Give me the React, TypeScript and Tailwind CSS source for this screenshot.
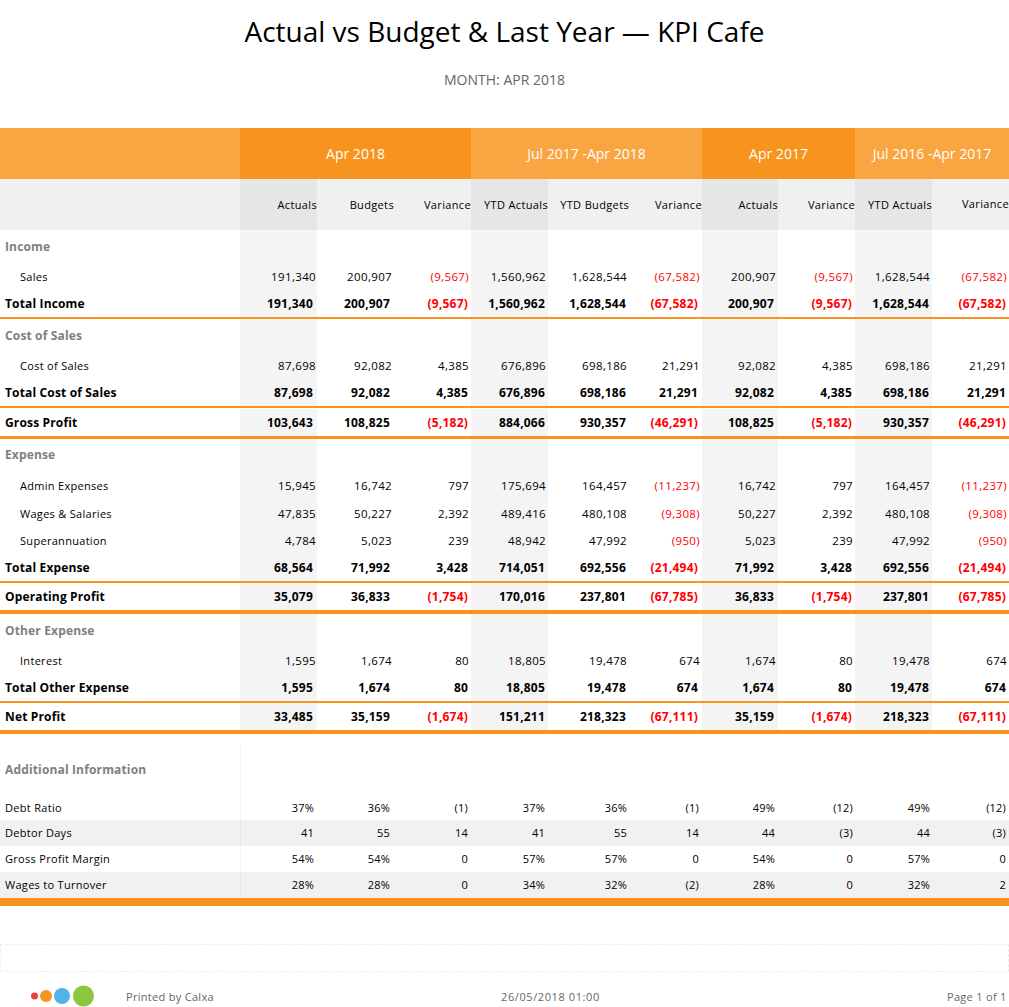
const GRID = "grid grid-cols-[240px_77px_77px_77px_77px_77px_77px_76px_77px_77px_77px]";
const SHADED = [0, 3, 6, 8];
const PAD_REG = ["pr-[1px]", "pr-[2px]", "pr-[2px]", "pr-[2px]", "-mr-[2px]", "pr-[2px]", "pr-[2px]", "pr-[2px]", "pr-[2px]", "pr-[2px]"];
const PAD_BOLD = ["pr-[4px]", "pr-[4px]", "pr-[3px]", "pr-[3px]", "-mr-[1px]", "pr-[4px]", "pr-[4px]", "pr-[3px]", "pr-[3px]", "pr-[3px]"];
const PAD_INFO = ["pr-[3px]", "pr-[4px]", "pr-[3px]", "pr-[3px]", "-mr-[2px]", "pr-[3px]", "pr-[3px]", "pr-[2px]", "pr-[2px]", "pr-[3px]"];
const PAD_HEAD = ["", "", "", "", "-mr-[4px]", "", "", "", "", ""];

type Kind = "section" | "item" | "total";
type R = { kind: Kind; label: string; h: string; v?: string[]; low?: boolean };

function Row({ kind, label, h, v, low }: R) {
  const values = v ?? Array(10).fill("");
  const labelCls =
    kind === "section"
      ? "pl-[5px] text-[12px] font-bold tracking-[0.15px] text-[#808080]"
      : kind === "item"
        ? "pl-[20px] pt-[1px] text-[11px] tracking-[0.3px] text-black"
        : "pl-[5px] text-[12px] font-bold tracking-[0.15px] text-black";
  return (
    <div className={`${GRID} ${h} ${low ? "pt-[1px]" : ""}`}>
      <div className={`flex items-center ${labelCls}`}>{label}</div>
      {values.map((t, i) => {
        const neg = t.startsWith("(");
        return (
          <div
            key={i}
            className={`flex items-center justify-end ${SHADED.includes(i) ? "bg-[#f4f4f4]" : ""} ${
              kind === "total"
                ? `${PAD_BOLD[i]} text-[12px] font-bold tracking-[0.2px]`
                : `${PAD_REG[i]} pt-[1px] text-[11.5px] tracking-[0.35px]`
            } ${neg ? "text-[#ff0000]" : "text-black"}`}
          >
            {t}
          </div>
        );
      })}
    </div>
  );
}

function InfoRow({ label, v, striped, h, high }: { label: string; v: string[]; striped?: boolean; h: string; high?: boolean }) {
  const line = striped ? "border-[#e6e6e6]" : "border-[#f4f4f4]";
  return (
    <div className={`${GRID} ${h} ${striped ? "bg-[#f1f1f1]" : ""}`}>
      <div className={`flex items-center pl-[5px] text-[11px] tracking-[0.3px] text-black ${high ? "" : "pt-[1px]"}`}>{label}</div>
      {v.map((t, i) => (
        <div
          key={i}
          className={`flex items-center justify-end text-[11px] tracking-[0.2px] text-black ${PAD_INFO[i]} ${high ? "" : "pt-[1px]"} ${i === 0 ? `border-l ${line}` : ""}`}
        >
          {t}
        </div>
      ))}
    </div>
  );
}

function Head({ t, className }: { t: string; className: string }) {
  return <div className={`flex items-center justify-center text-[14px] text-white ${className}`}>{t}</div>;
}

const L2 = () => <div className="h-[2px] bg-[#f7941e]" />;
const L3 = () => <div className="h-[3px] bg-[#f7941e]" />;
const L4 = () => <div className="h-[4px] bg-[#f7941e]" />;

const colHeads = ["Actuals", "Budgets", "Variance", "YTD Actuals", "YTD Budgets", "Variance", "Actuals", "Variance", "YTD Actuals", "Variance"];

export default function App() {
  return (
    <div className="h-[1007px] w-[1009px] overflow-hidden bg-white font-['Open_Sans',sans-serif]">
      <h1 className="h-[60px] pt-[12px] text-center text-[28px] leading-[38px] font-normal text-black">Actual vs Budget &amp; Last Year — KPI Cafe</h1>
      <p className="h-[68px] pt-[10px] text-center text-[14px] leading-[20px] text-[#666]">MONTH: APR 2018</p>

      <div className="grid h-[51px] grid-cols-[240px_231px_231px_153px_154px]">
        <div className="bg-[#f9a541]" />
        <Head t="Apr 2018" className="bg-[#f7941e]" />
        <Head t="Jul 2017 -Apr 2018" className="bg-[#f9a541]" />
        <Head t="Apr 2017" className="bg-[#f7941e]" />
        <Head t="Jul 2016 -Apr 2017" className="bg-[#f9a541]" />
      </div>
      <div className={`${GRID} h-[51px] bg-[#f0f0f0]`}>
        <div />
        {colHeads.map((t, i) => (
          <div
            key={i}
            className={`flex items-center justify-end whitespace-nowrap text-[11px] tracking-[0.35px] text-black ${PAD_HEAD[i]} ${i === 9 ? "" : "pt-[2px]"} ${SHADED.includes(i) ? "bg-[#e6e6e6]" : ""}`}
          >
            {t}
          </div>
        ))}
      </div>

      <Row kind="section" label="Income" h="h-[33px]" />
      <Row kind="item" label="Sales" h="h-[27px]" v={["191,340", "200,907", "(9,567)", "1,560,962", "1,628,544", "(67,582)", "200,907", "(9,567)", "1,628,544", "(67,582)"]} />
      <Row kind="total" label="Total Income" h="h-[27px]" v={["191,340", "200,907", "(9,567)", "1,560,962", "1,628,544", "(67,582)", "200,907", "(9,567)", "1,628,544", "(67,582)"]} />
      <L2 />
      <Row kind="section" label="Cost of Sales" h="h-[33px]" />
      <Row kind="item" label="Cost of Sales" h="h-[27px]" v={["87,698", "92,082", "4,385", "676,896", "698,186", "21,291", "92,082", "4,385", "698,186", "21,291"]} />
      <Row kind="total" label="Total Cost of Sales" h="h-[27px]" v={["87,698", "92,082", "4,385", "676,896", "698,186", "21,291", "92,082", "4,385", "698,186", "21,291"]} />
      <L2 />
      <Row kind="total" label="Gross Profit" h="h-[28px]" low v={["103,643", "108,825", "(5,182)", "884,066", "930,357", "(46,291)", "108,825", "(5,182)", "930,357", "(46,291)"]} />
      <L3 />
      <Row kind="section" label="Expense" h="h-[32px]" />
      <Row kind="item" label="Admin Expenses" h="h-[29px]" v={["15,945", "16,742", "797", "175,694", "164,457", "(11,237)", "16,742", "797", "164,457", "(11,237)"]} />
      <Row kind="item" label="Wages & Salaries" h="h-[27px]" v={["47,835", "50,227", "2,392", "489,416", "480,108", "(9,308)", "50,227", "2,392", "480,108", "(9,308)"]} />
      <Row kind="item" label="Superannuation" h="h-[27px]" v={["4,784", "5,023", "239", "48,942", "47,992", "(950)", "5,023", "239", "47,992", "(950)"]} />
      <Row kind="total" label="Total Expense" h="h-[27px]" v={["68,564", "71,992", "3,428", "714,051", "692,556", "(21,494)", "71,992", "3,428", "692,556", "(21,494)"]} />
      <L2 />
      <Row kind="total" label="Operating Profit" h="h-[27px]" v={["35,079", "36,833", "(1,754)", "170,016", "237,801", "(67,785)", "36,833", "(1,754)", "237,801", "(67,785)"]} />
      <L4 />
      <Row kind="section" label="Other Expense" h="h-[33px]" />
      <Row kind="item" label="Interest" h="h-[27px]" v={["1,595", "1,674", "80", "18,805", "19,478", "674", "1,674", "80", "19,478", "674"]} />
      <Row kind="total" label="Total Other Expense" h="h-[27px]" v={["1,595", "1,674", "80", "18,805", "19,478", "674", "1,674", "80", "19,478", "674"]} />
      <L2 />
      <Row kind="total" label="Net Profit" h="h-[27px]" v={["33,485", "35,159", "(1,674)", "151,211", "218,323", "(67,111)", "35,159", "(1,674)", "218,323", "(67,111)"]} />
      <L4 />

      <div className="h-[11px]" />
      <div className={`${GRID} h-[50px]`}>
        <div className="flex items-center pl-[5px] text-[12px] font-bold tracking-[0.15px] text-[#808080]">Additional Information</div>
        <div className="border-l border-[#f4f4f4]" />
      </div>
      <InfoRow label="Debt Ratio" h="h-[25px]" v={["37%", "36%", "(1)", "37%", "36%", "(1)", "49%", "(12)", "49%", "(12)"]} />
      <InfoRow label="Debtor Days" h="h-[26px]" striped v={["41", "55", "14", "41", "55", "14", "44", "(3)", "44", "(3)"]} />
      <InfoRow label="Gross Profit Margin" h="h-[26px]" v={["54%", "54%", "0", "57%", "57%", "0", "54%", "0", "57%", "0"]} />
      <InfoRow label="Wages to Turnover" h="h-[26px]" striped high v={["28%", "28%", "0", "34%", "32%", "(2)", "28%", "0", "32%", "2"]} />
      <div className="h-[8px] bg-[#f7941e]" />

      <div className="mt-[38px] h-[28px] border border-dashed border-[#efefef]" />

      <div className="mt-[12px] flex h-[24px] items-center text-[11px] text-[#666]">
        <div className="flex w-[126px] shrink-0 items-center pl-[31px]">
          <svg width="66" height="22" viewBox="0 0 66 22">
            <circle cx="3.5" cy="11" r="3.5" fill="#ee3e3e" />
            <circle cx="15" cy="11" r="6" fill="#f7941e" />
            <circle cx="31" cy="11" r="8" fill="#55b2e8" />
            <circle cx="52.5" cy="11" r="10.5" fill="#8cc63f" />
          </svg>
        </div>
        <span className="w-[375px] pt-[2px] tracking-[0.3px]">Printed by Calxa</span>
        <span className="w-[446px] pt-[2px] tracking-[0.6px]">26/05/2018 01:00</span>
        <span className="pt-[2px] tracking-[0.3px]">Page 1 of 1</span>
      </div>
    </div>
  );
}
